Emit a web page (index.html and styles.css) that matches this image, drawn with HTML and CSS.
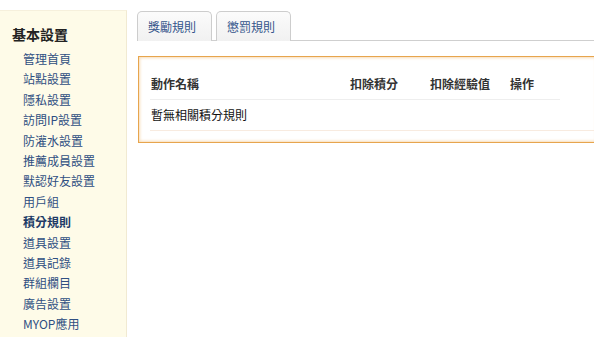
FILE: index.html
```html
<!DOCTYPE html>
<html>
<head>
<meta charset="utf-8">
<link rel="stylesheet" href="styles.css">
</head>
<body>
<div class="page">
  <aside class="side">
    <h3 class="side-title">基本設置</h3>
    <ul class="side-list">
      <li><a href="#">管理首頁</a></li>
      <li><a href="#">站點設置</a></li>
      <li><a href="#">隱私設置</a></li>
      <li><a href="#">訪問IP設置</a></li>
      <li><a href="#">防灌水設置</a></li>
      <li><a href="#">推薦成員設置</a></li>
      <li><a href="#">默認好友設置</a></li>
      <li><a href="#">用戶組</a></li>
      <li><a href="#" class="active">積分規則</a></li>
      <li><a href="#">道具設置</a></li>
      <li><a href="#">道具記錄</a></li>
      <li><a href="#">群組欄目</a></li>
      <li><a href="#">廣告設置</a></li>
      <li><a href="#">MYOP應用</a></li>
    </ul>
  </aside>
  <main class="main">
    <div class="tabs">
      <a href="#" class="tab">獎勵規則</a>
      <a href="#" class="tab">懲罰規則</a>
    </div>
    <div class="box">
      <div class="head-row">
        <span class="c1">動作名稱</span>
        <span class="c2">扣除積分</span>
        <span class="c3">扣除經驗值</span>
        <span class="c4">操作</span>
      </div>
      <div class="empty-row">暫無相關積分規則</div>
    </div>
  </main>
</div>
</body>
</html>
```
FILE: styles.css
```css
html, body {
  margin: 0;
  padding: 0;
  background: #fff;
  overflow: hidden;
}
body {
  font-family: "Noto Sans CJK TC", "Liberation Sans", sans-serif;
  font-size: 12px;
  color: #222;
}
.page {
  display: flex;
  width: 594px;
  height: 337px;
}
.side {
  flex: 0 0 126px;
  margin-top: 10px;
  background: #fefbe8;
  border-right: 1px solid #f1ead2;
  border-top: 1px solid #f6f0dc;
}
.side-title {
  margin: 14px 0 6px 12px;
  font-size: 14px;
  font-weight: bold;
  line-height: 18px;
  color: #222;
}
.side-list {
  list-style: none;
  margin: 0;
  padding: 0 0 0 23px;
}
.side-list li {
  height: 20.4px;
  line-height: 20.4px;
}
.side-list a {
  color: #2f4f82;
  text-decoration: none;
}
.side-list a.active {
  font-weight: bold;
  color: #203a66;
}
.main {
  flex: 1;
  padding: 11px 0 0 10px;
  min-width: 0;
}
.tabs {
  display: flex;
  gap: 4px;
  border-bottom: 1px solid #cfcfcf;
  height: 29px;
}
.tab {
  display: block;
  box-sizing: border-box;
  height: 30px;
  padding: 0 10px;
  line-height: 30px;
  border: 1px solid #cdcdcd;
  border-bottom: none;
  border-radius: 5px 5px 0 0;
  background: linear-gradient(#fbfbfb, #f1f1f1);
  color: #34558b;
  text-decoration: none;
  width: 75px;
}
.box {
  margin-top: 15px;
  margin-left: 1px;
  border: 1px solid #e7a54d;
  border-right: none;
  box-shadow: inset 3px 0 3px -2px #f7dcb7, inset 0 3px 3px -2px #f7dcb7, inset 0 -3px 3px -2px #f7dcb7;
  padding: 12px 0 11px 11px;
}
.head-row {
  display: flex;
  width: 410px;
  height: 30px;
  line-height: 30px;
  border-bottom: 1px solid #eeeeee;
  font-weight: bold;
  color: #333;
}
.head-row span {
  padding-left: 1px;
}
.c1 { flex: 0 0 198px; }
.c2 { flex: 0 0 79px; }
.c3 { flex: 0 0 79px; }
.c4 { flex: 0 0 50px; }
.empty-row {
  height: 30px;
  line-height: 30px;
  padding-left: 1px;
  border-bottom: 1px solid #f8ebe0;
  color: #111;
}
```
